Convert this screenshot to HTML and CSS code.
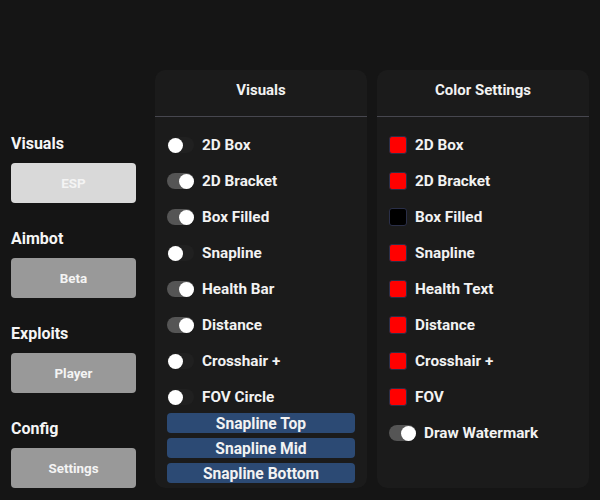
FILE: index.html
```html
<!DOCTYPE html>
<html>
<head>
<meta charset="utf-8">
<link rel="stylesheet" href="styles.css">
</head>
<body>
<div class="app">
  <nav class="sidebar">
    <div class="section">
      <div class="sec-label">Visuals</div>
      <button class="side-btn active">ESP</button>
    </div>
    <div class="section">
      <div class="sec-label">Aimbot</div>
      <button class="side-btn">Beta</button>
    </div>
    <div class="section">
      <div class="sec-label">Exploits</div>
      <button class="side-btn">Player</button>
    </div>
    <div class="section">
      <div class="sec-label">Config</div>
      <button class="side-btn">Settings</button>
    </div>
  </nav>

  <section class="panel">
    <div class="panel-head">Visuals</div>
    <div class="panel-body">
      <div class="row"><span class="toggle"><span class="knob"></span></span><span class="label">2D Box</span></div>
      <div class="row"><span class="toggle on"><span class="knob"></span></span><span class="label">2D Bracket</span></div>
      <div class="row"><span class="toggle on"><span class="knob"></span></span><span class="label">Box Filled</span></div>
      <div class="row"><span class="toggle"><span class="knob"></span></span><span class="label">Snapline</span></div>
      <div class="row"><span class="toggle on"><span class="knob"></span></span><span class="label">Health Bar</span></div>
      <div class="row"><span class="toggle on"><span class="knob"></span></span><span class="label">Distance</span></div>
      <div class="row"><span class="toggle"><span class="knob"></span></span><span class="label">Crosshair +</span></div>
      <div class="row"><span class="toggle"><span class="knob"></span></span><span class="label">FOV Circle</span></div>
      <div class="snap-list">
        <button class="snap-btn">Snapline Top</button>
        <button class="snap-btn">Snapline Mid</button>
        <button class="snap-btn">Snapline Bottom</button>
      </div>
    </div>
  </section>

  <section class="panel">
    <div class="panel-head">Color Settings</div>
    <div class="panel-body">
      <div class="row"><span class="swatch red"></span><span class="label">2D Box</span></div>
      <div class="row"><span class="swatch red"></span><span class="label">2D Bracket</span></div>
      <div class="row"><span class="swatch black"></span><span class="label">Box Filled</span></div>
      <div class="row"><span class="swatch red"></span><span class="label">Snapline</span></div>
      <div class="row"><span class="swatch red"></span><span class="label">Health Text</span></div>
      <div class="row"><span class="swatch red"></span><span class="label">Distance</span></div>
      <div class="row"><span class="swatch red"></span><span class="label">Crosshair +</span></div>
      <div class="row"><span class="swatch red"></span><span class="label">FOV</span></div>
      <div class="row"><span class="toggle on"><span class="knob"></span></span><span class="label">Draw Watermark</span></div>
    </div>
  </section>
</div>
</body>
</html>
```

FILE: styles.css
```css
* { box-sizing: border-box; }
html, body {
  margin: 0;
  padding: 0;
  background: #151515;
  width: 600px;
  height: 500px;
  overflow: hidden;
  font-family: Roboto, "Liberation Sans", sans-serif;
  font-weight: 700;
  color: #f2f2f2;
}
.app {
  display: flex;
  align-items: flex-start;
  padding-top: 70px;
}
.sidebar {
  width: 155px;
  padding-left: 11px;
  padding-top: 64px;
  display: flex;
  flex-direction: column;
}
.section {
  height: 95px;
  display: flex;
  flex-direction: column;
}
.sec-label {
  font-size: 16px;
  line-height: 20px;
  height: 20px;
  margin-bottom: 9px;
  color: #f5f5f5;
}
.side-btn {
  width: 125px;
  height: 40px;
  border: none;
  border-radius: 4px;
  background: #999999;
  color: #f4f4f4;
  font-family: inherit;
  font-weight: 700;
  font-size: 13.4px;
  padding: 0;
}
.side-btn.active {
  background: #d9d9d9;
  color: #f4f4f4;
}
.panel {
  width: 212px;
  height: 418px;
  background: #1b1b1b;
  border-radius: 10px;
  margin-right: 10px;
  display: flex;
  flex-direction: column;
}
.panel-head {
  font-size: 15px;
  line-height: 20px;
  text-align: center;
  padding: 10px 0 16px;
  border-bottom: 1px solid #47474f;
}
.panel-body {
  padding: 10px 12px 0;
  display: flex;
  flex-direction: column;
}
.row {
  height: 36px;
  display: flex;
  align-items: center;
  gap: 8px;
  font-size: 15.3px;
}
.label { line-height: 20px; }
.toggle {
  position: relative;
  width: 27px;
  height: 16px;
  border-radius: 8px;
  background: #202020;
  flex: none;
}
.toggle.on { background: #555555; }
.knob {
  position: absolute;
  top: 0.5px;
  left: 1px;
  width: 15px;
  height: 15px;
  border-radius: 50%;
  background: #ffffff;
}
.toggle.on .knob { left: auto; right: 0; }
.swatch {
  width: 18px;
  height: 18px;
  border-radius: 3px;
  border: 1px solid #2a2f48;
  flex: none;
}
.swatch.red { background: #ff0000; }
.swatch.black { background: #000000; }
.snap-list {
  margin-top: -2px;
  display: flex;
  flex-direction: column;
  gap: 5px;
}
.snap-btn {
  height: 20px;
  width: 188px;
  border: none;
  border-radius: 4px;
  background: #2c4a74;
  color: #f2f2f2;
  font-family: inherit;
  font-weight: 700;
  font-size: 15.6px;
  line-height: 20px;
  padding: 1px 0 0;
}
```
